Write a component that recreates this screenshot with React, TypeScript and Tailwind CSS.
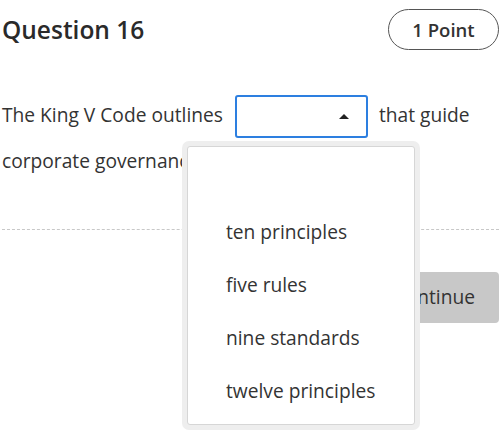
export default function App() {
    const options = ['', 'ten principles', 'five rules', 'nine standards', 'twelve principles'];

    return (
        <div className="relative h-[447px] w-[500px] overflow-hidden bg-white pl-[2px] pr-[1px] text-[#333]" style={{ fontFamily: '"Open Sans", "Liberation Sans", sans-serif' }}>
            <div className="flex h-[60px] items-start justify-between pt-[9px]">
                <h2 className="pt-[3px] text-[24.5px] font-semibold leading-[36px] text-[#2a2a2a]">Question 16</h2>
                <span className="flex h-[41px] w-[111px] items-center justify-center rounded-full border border-[#555] text-[18.5px] font-semibold text-[#333]">
                    1 Point
                </span>
            </div>

            <p className="mt-[32px] text-[19.2px] leading-[45px]">
                The King V Code outlines{' '}
                <span className="relative ml-[7px] mr-[6px] inline-block h-[43px] w-[133px] rounded-[3px] border-2 border-[#2d7fe0] align-middle">
                    <span className="absolute right-[17px] top-[17px] h-0 w-0 border-x-[5px] border-b-[5px] border-x-transparent border-b-[#222]" />
                </span>{' '}
                that guide corporate governance.
            </p>

            <div className="mt-[46px] border-t border-dashed border-[#c8c8c8]" />

            <div className="mt-[42px] flex justify-end">
                <button type="button" className="h-[51px] rounded-[4px] bg-[#c8c8c8] pl-[24px] pr-[24px] text-[19.2px] text-[#333]">
                    Continue
                </button>
            </div>

            {/* open dropdown */}
            <div className="absolute left-[182px] top-[141px] w-[238px] rounded-[7px] bg-[#eeeeee] p-[5px]">
                <ul className="rounded-[3px] border border-[#d6d6d6] bg-white pb-[6px] pt-[6px]">
                    {options.map((o, i) => (
                        <li key={i} className="flex h-[53px] items-center pl-[38px] text-[19.2px] text-[#333]">
                            {o}
                        </li>
                    ))}
                </ul>
            </div>
        </div>
    );
}
